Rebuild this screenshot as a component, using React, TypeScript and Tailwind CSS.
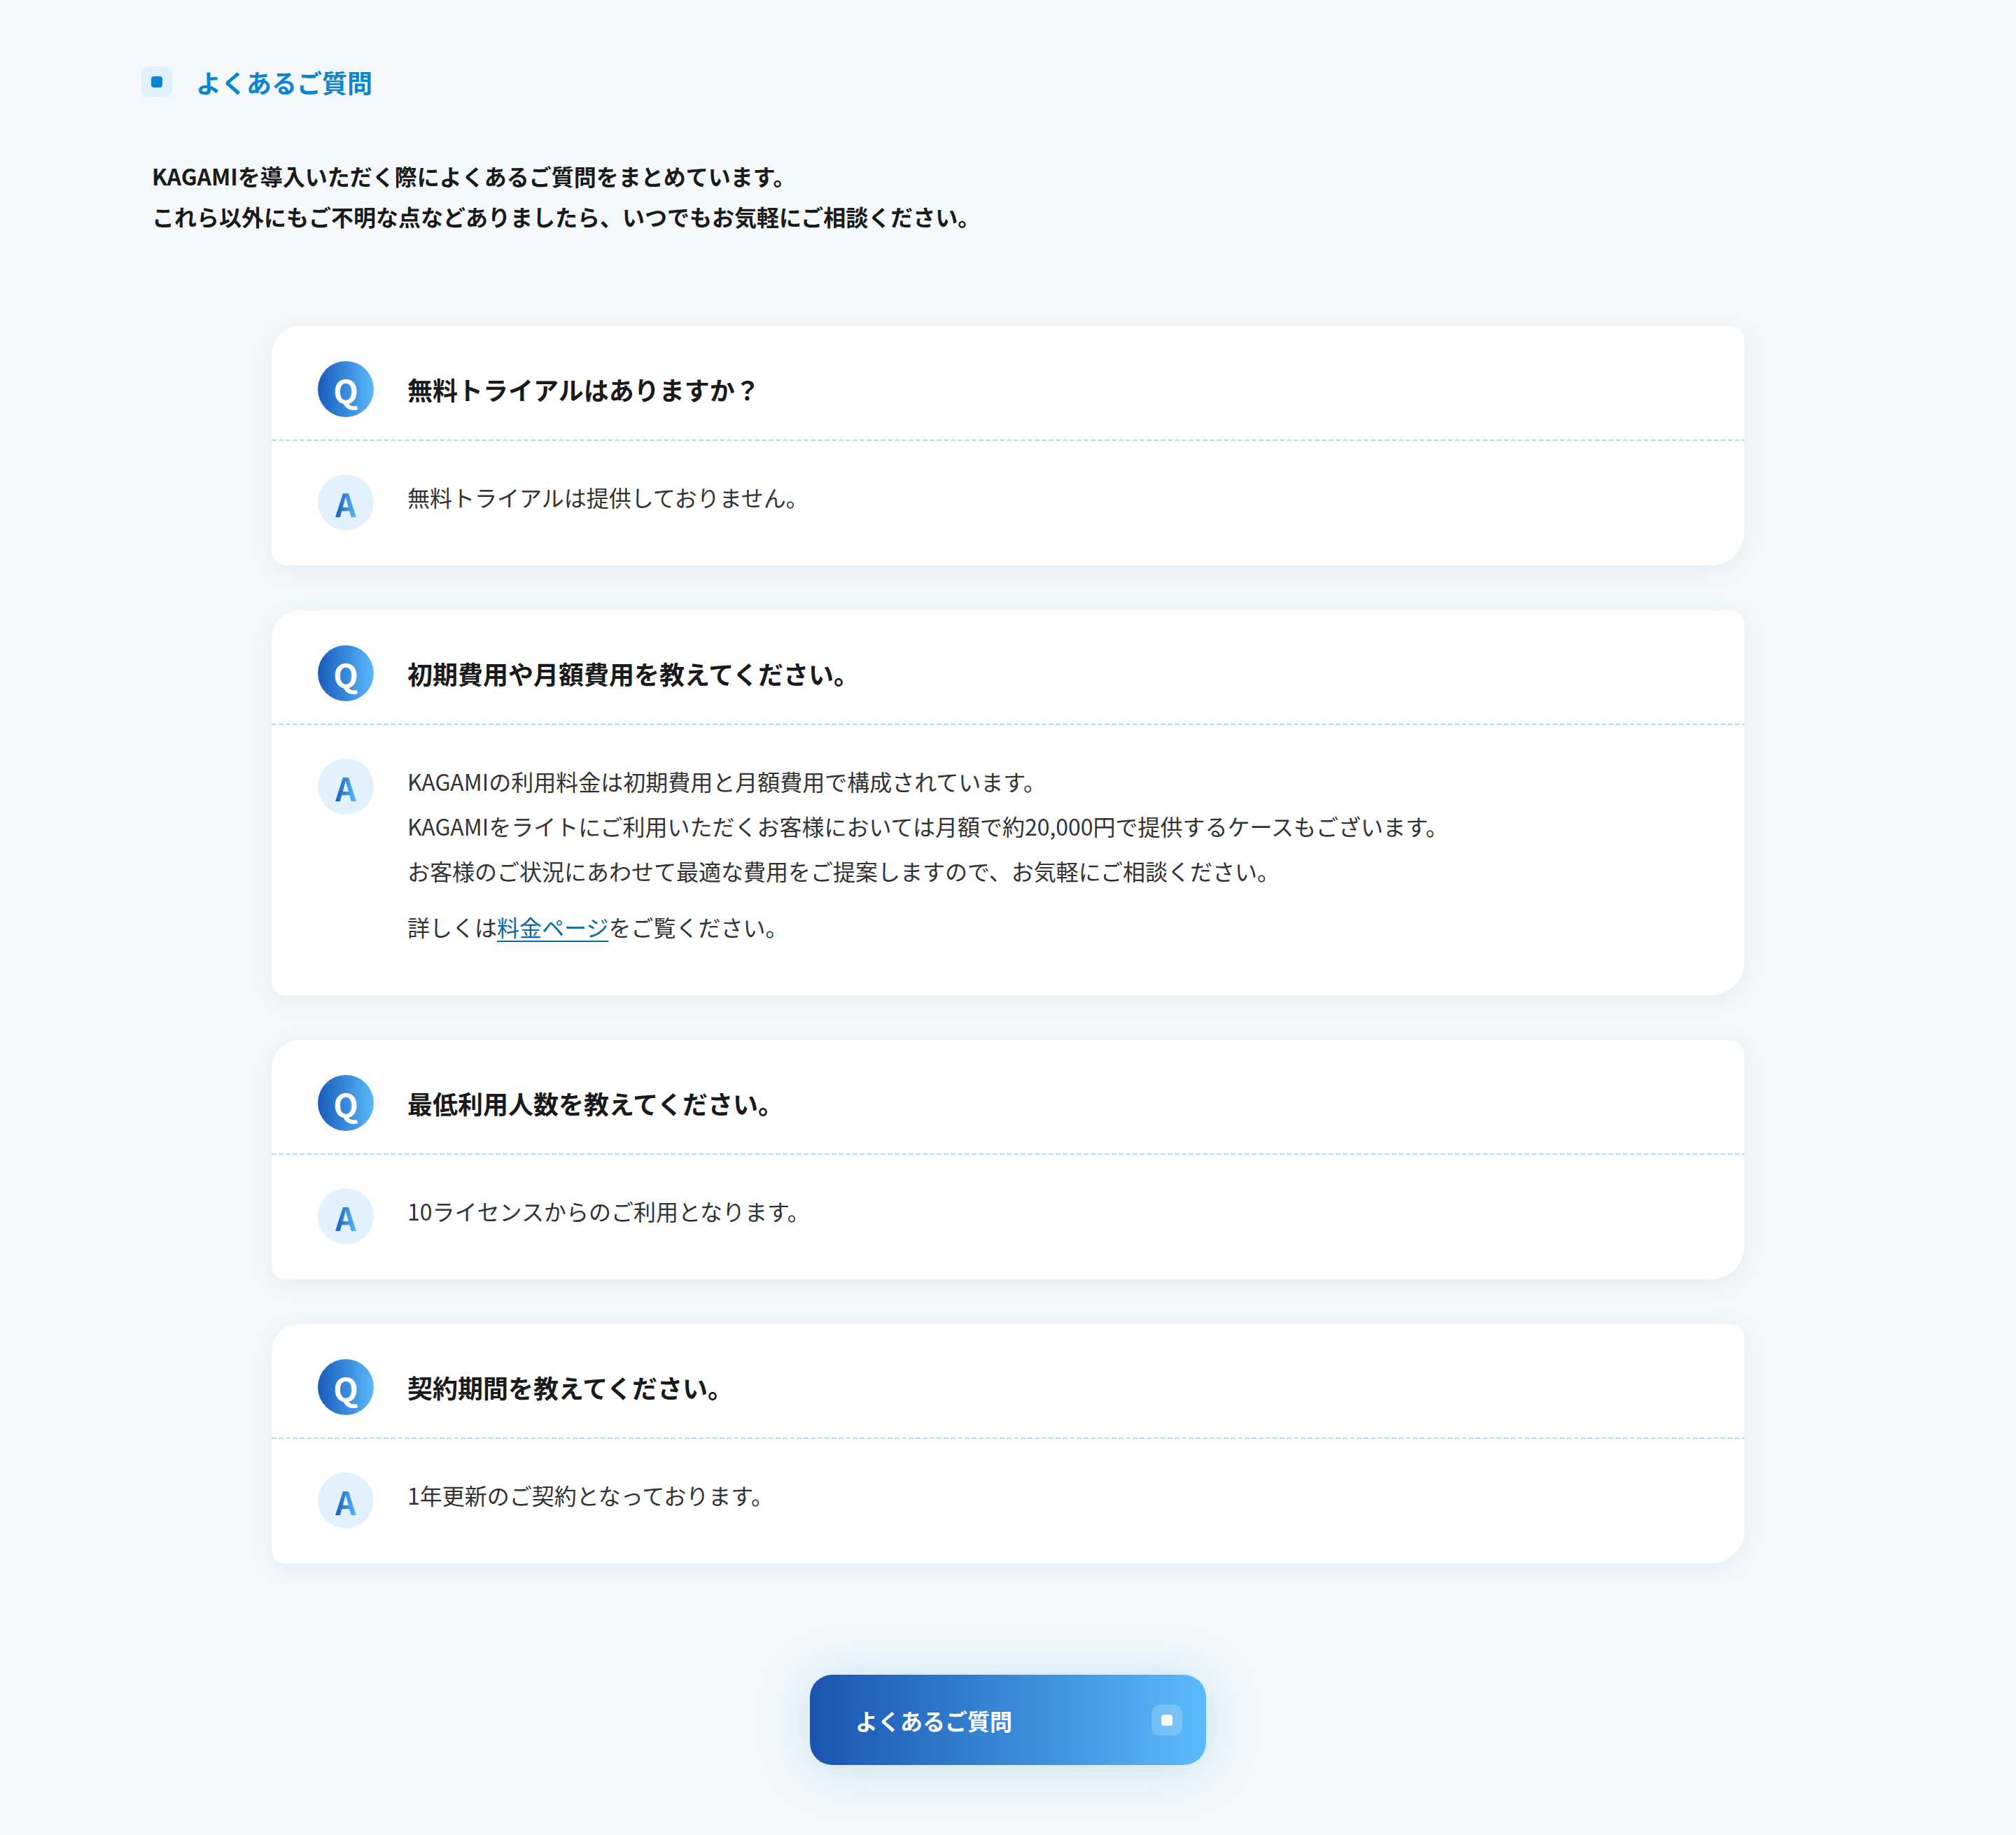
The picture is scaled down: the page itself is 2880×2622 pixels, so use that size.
import React from "react";

type Faq = {
  q: string;
  a: React.ReactNode[];
};

const faqs: Faq[] = [
  {
    q: "無料トライアルはありますか？",
    a: ["無料トライアルは提供しておりません。"],
  },
  {
    q: "初期費用や月額費用を教えてください。",
    a: [
      <>
        KAGAMIの利用料金は初期費用と月額費用で構成されています。
        <br />
        KAGAMIをライトにご利用いただくお客様においては月額で約20,000円で提供するケースもございます。
        <br />
        お客様のご状況にあわせて最適な費用をご提案しますので、お気軽にご相談ください。
      </>,
      <>
        詳しくは
        <a href="#" className="text-[#0b6aa6] underline underline-offset-[6px] decoration-2">
          料金ページ
        </a>
        をご覧ください。
      </>,
    ],
  },
  {
    q: "最低利用人数を教えてください。",
    a: ["10ライセンスからのご利用となります。"],
  },
  {
    q: "契約期間を教えてください。",
    a: ["1年更新のご契約となっております。"],
  },
];

function FaqCard({ item }: { item: Faq }) {
  return (
    <div className="bg-white rounded-tl-[40px] rounded-tr-[20px] rounded-bl-[20px] rounded-br-[48px] shadow-[0_6px_30px_rgba(40,90,130,0.07)]">
      {/* 質問 */}
      <div className="flex items-center gap-[48px] px-[66px] pt-[50px] pb-[32px]">
        <div className="w-[80px] h-[80px] shrink-0 rounded-full bg-linear-to-r from-[#1b5bbd] to-[#5ab9f9] flex items-center justify-center">
          <span className="text-white text-[46px] font-bold leading-none pt-[2px]">Q</span>
        </div>
        <p className="text-[36px] leading-[48px] font-bold text-[#1a1a1a]">{item.q}</p>
      </div>

      <div className="h-[2px] bg-[repeating-linear-gradient(to_right,#b6ddf3_0px,#b6ddf3_7px,transparent_7px,transparent_10px)]" />

      {/* 回答 */}
      <div className="flex items-start gap-[48px] px-[66px] pt-[48px] pb-[50px]">
        <div className="w-[80px] h-[80px] shrink-0 rounded-full bg-[#e1f1fd] flex items-center justify-center">
          <span className="text-[46px] font-bold leading-none pt-[2px] bg-linear-to-r from-[#1b5bbd] to-[#5ab9f9] bg-clip-text text-transparent">
            A
          </span>
        </div>
        <div className="flex flex-col text-[32px] leading-[64px] text-[#333333]">
          {item.a.map((para, i) => (
            <p key={i} className="mb-[16px]">
              {para}
            </p>
          ))}
        </div>
      </div>
    </div>
  );
}

export default function App() {
  return (
    <div className="min-h-screen bg-[#f4f8fa] font-['Noto_Sans_CJK_JP','Noto_Sans',sans-serif] pt-[95px] pb-[100px]">
      {/* 見出し */}
      <div className="flex items-center gap-[34px] pl-[202px]">
        <div className="w-[44px] h-[44px] rounded-[12px] bg-[#e0f1fd] flex items-center justify-center">
          <div className="w-[16px] h-[16px] rounded-[4px] bg-[#0a85cf]" />
        </div>
        <h2 className="text-[36px] leading-[44px] font-bold text-[#0a85cf]">よくあるご質問</h2>
      </div>

      {/* 説明 */}
      <div className="mt-[83px] pl-[217px] text-[32px] leading-[58px] font-bold text-[#1a1a1a]">
        <p>KAGAMIを導入いただく際によくあるご質問をまとめています。</p>
        <p>これら以外にもご不明な点などありましたら、いつでもお気軽にご相談ください。</p>
      </div>

      {/* FAQ一覧 */}
      <div className="mt-[128px] w-[2104px] mx-auto flex flex-col gap-[64px]">
        {faqs.map((item, i) => (
          <FaqCard key={i} item={item} />
        ))}
      </div>

      {/* ボタン */}
      <div className="mt-[159px] flex justify-center">
        <a
          href="#"
          className="w-[566px] h-[129px] rounded-[32px] bg-linear-to-r from-[#1a55b0] to-[#5cbbfc] flex items-center justify-between pl-[65px] pr-[34px] shadow-[0_4px_70px_rgba(90,175,240,0.32)]"
        >
          <span className="text-white text-[32px] font-bold leading-none">よくあるご質問</span>
          <span className="w-[44px] h-[44px] rounded-[12px] bg-white/20 flex items-center justify-center">
            <span className="w-[16px] h-[16px] rounded-[4px] bg-white" />
          </span>
        </a>
      </div>
    </div>
  );
}
